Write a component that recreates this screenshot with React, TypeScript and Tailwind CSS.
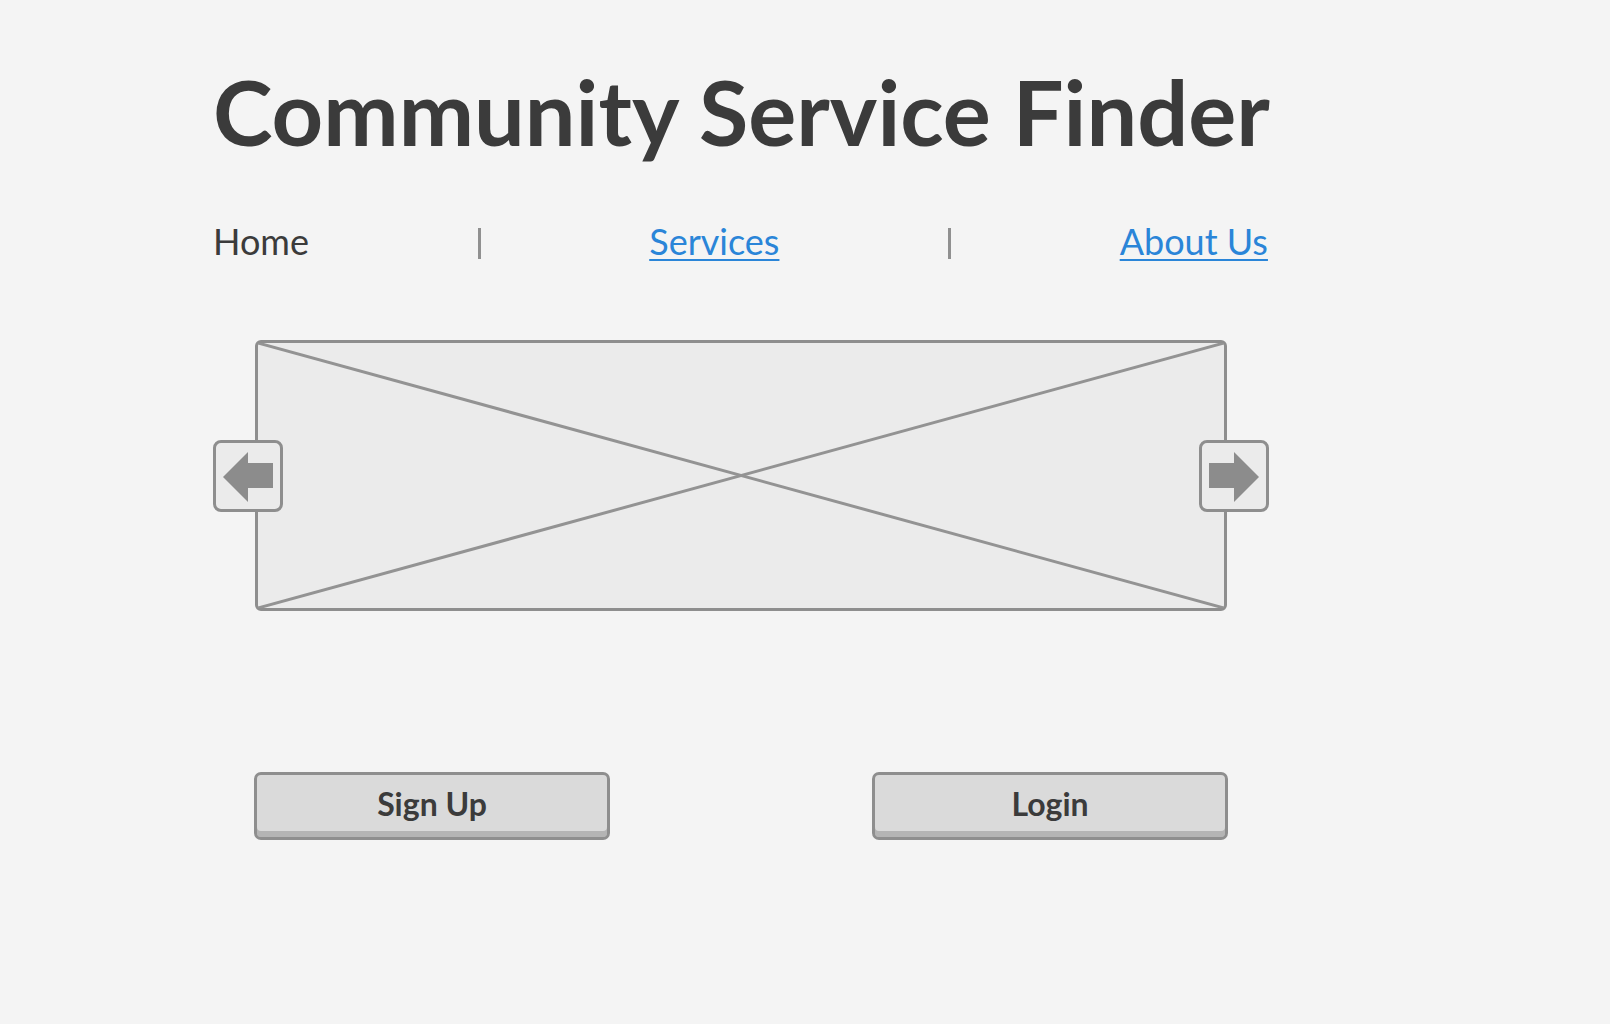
import React from "react";

function ArrowButton({ side }: { side: "left" | "right" }) {
  const points =
    side === "left"
      ? "7,34 32,9 32,20 57,20 57,45 32,45 32,59"
      : "57,34 32,9 32,20 7,20 7,45 32,45 32,59";
  return (
    <button
      type="button"
      className={`absolute top-[97px] h-[72px] w-[70px] rounded-[8px] border-[3px] border-[#8e8e8e] bg-[#ebebeb] ${
        side === "left" ? "left-[-45px]" : "right-[-45px]"
      }`}
    >
      <svg viewBox="0 0 64 66" className="h-full w-full">
        <polygon points={points} fill="#8c8c8c" />
      </svg>
    </button>
  );
}

function Separator() {
  return <span className="h-[31px] w-[3px] bg-[#909090]" />;
}

function WireButton({ label }: { label: string }) {
  return (
    <button
      type="button"
      className="flex h-[68px] w-[356px] items-center justify-center rounded-[7px] border-[3px] border-[#8e8e8e] bg-[#dadada] pb-[5px] text-[32px] font-bold text-[#3b3b3b] shadow-[inset_0_-6px_0_#b4b4b4]"
    >
      {label}
    </button>
  );
}

export default function App() {
  return (
    <div className="min-h-screen bg-[#f4f4f4] font-['Lato',sans-serif] text-[#3b3b3b]">
      <div className="ml-[213px] w-[1055px] pt-[66px]">
        <h1 className="text-[90px] font-bold leading-none whitespace-nowrap">
          Community Service Finder
        </h1>

        <nav className="mt-[67px] flex h-[36px] items-end justify-between text-[36px] leading-none">
          <span className="self-start">Home</span>
          <Separator />
          <a href="#" className="self-start text-[#2a85d8] underline decoration-2 underline-offset-[4px]">
            Services
          </a>
          <Separator />
          <a href="#" className="self-start text-[#2a85d8] underline decoration-2 underline-offset-[4px]">
            About Us
          </a>
        </nav>

        <div className="relative ml-[42px] mt-[81px] h-[271px] w-[972px] rounded-[6px] border-[3px] border-[#8e8e8e] bg-[#ebebeb]">
          <svg className="absolute inset-0 h-full w-full" preserveAspectRatio="none" viewBox="0 0 100 100">
            <line x1="0" y1="0" x2="100" y2="100" stroke="#939393" strokeWidth="3" vectorEffect="non-scaling-stroke" />
            <line x1="100" y1="0" x2="0" y2="100" stroke="#939393" strokeWidth="3" vectorEffect="non-scaling-stroke" />
          </svg>
          <ArrowButton side="left" />
          <ArrowButton side="right" />
        </div>

        <div className="ml-[41px] mt-[161px] flex w-[974px] justify-between">
          <WireButton label="Sign Up" />
          <WireButton label="Login" />
        </div>
      </div>
    </div>
  );
}
